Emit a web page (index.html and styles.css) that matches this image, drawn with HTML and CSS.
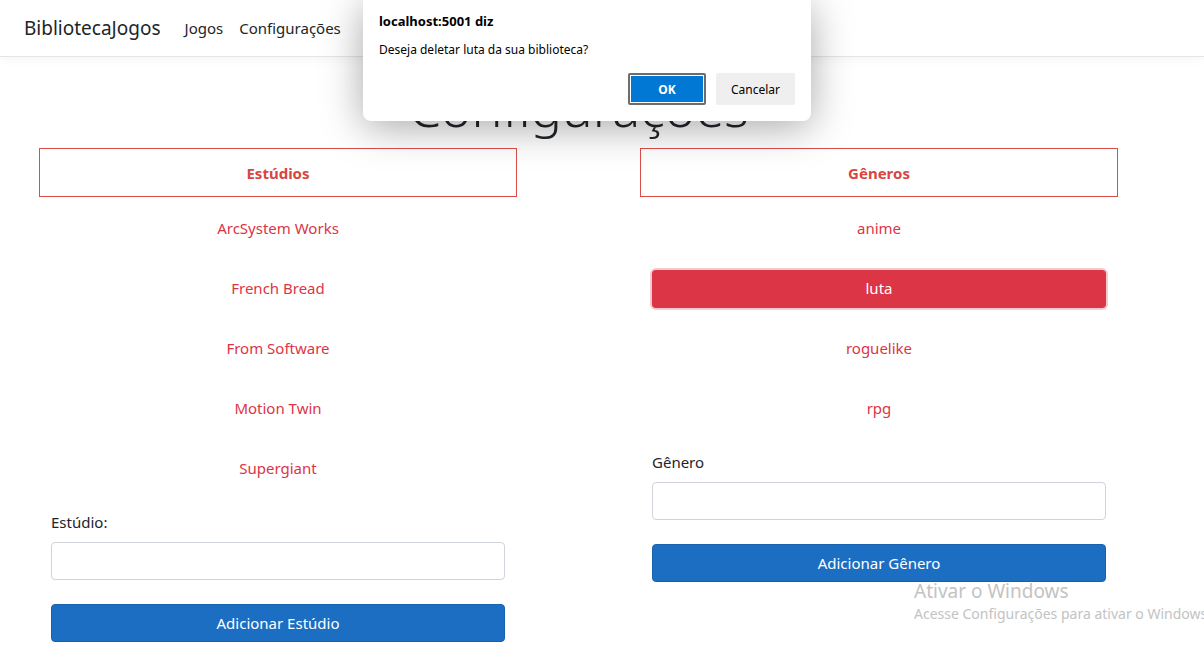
FILE: index.html
```html
<!DOCTYPE html>
<html lang="pt-BR">
<head>
<meta charset="utf-8">
<title>Configurações - BibliotecaJogos</title>
<link rel="stylesheet" href="styles.css">
</head>
<body>
<header class="navbar">
  <a class="brand" href="#">BibliotecaJogos</a>
  <nav class="nav">
    <a class="nav-link" href="#">Jogos</a>
    <a class="nav-link" href="#">Configurações</a>
  </nav>
</header>

<main class="page">
  <h1 class="title">Configurações</h1>
  <div class="columns">
    <section class="col">
      <div class="col-head">Estúdios</div>
      <ul class="items">
        <li><button class="item">ArcSystem Works</button></li>
        <li><button class="item">French Bread</button></li>
        <li><button class="item">From Software</button></li>
        <li><button class="item">Motion Twin</button></li>
        <li><button class="item">Supergiant</button></li>
      </ul>
      <form class="add-form">
        <label class="label">Estúdio:</label>
        <input class="input" type="text">
        <button class="btn-primary" type="button">Adicionar Estúdio</button>
      </form>
    </section>
    <section class="col">
      <div class="col-head">Gêneros</div>
      <ul class="items">
        <li><button class="item">anime</button></li>
        <li><button class="item active">luta</button></li>
        <li><button class="item">roguelike</button></li>
        <li><button class="item">rpg</button></li>
      </ul>
      <form class="add-form">
        <label class="label">Gênero</label>
        <input class="input" type="text">
        <button class="btn-primary" type="button">Adicionar Gênero</button>
      </form>
    </section>
  </div>
</main>

<div class="watermark">
  <div class="wm-title">Ativar o Windows</div>
  <div class="wm-sub">Acesse Configurações para ativar o Windows.</div>
</div>

<div class="dialog">
  <div class="dlg-title">localhost:5001 diz</div>
  <div class="dlg-msg">Deseja deletar luta da sua biblioteca?</div>
  <div class="dlg-actions">
    <button class="dlg-ok">OK</button>
    <button class="dlg-cancel">Cancelar</button>
  </div>
</div>
</body>
</html>
```

FILE: styles.css
```css
* { box-sizing: border-box; }
html, body { margin: 0; padding: 0; }
body {
  font-family: "Noto Sans", "Open Sans", sans-serif;
  font-size: 15px;
  color: #212529;
  background: #fff;
  width: 1204px;
  height: 646px;
  overflow: hidden;
  position: relative;
}
a { text-decoration: none; color: inherit; }

.navbar {
  height: 57px;
  display: flex;
  align-items: center;
  padding: 0 24px;
  border-bottom: 1px solid #e5e5e5;
  box-shadow: 0 3px 10px rgba(0,0,0,0.04);
}
.brand {
  font-size: 19px;
  color: #212529;
  margin-right: 16px;
}
.nav { display: flex; }
.nav-link {
  padding: 0 8px;
  font-size: 15px;
  color: #212529;
}

.page {
  width: 1079px;
  margin-left: 39px;
}
.title {
  margin: 16px 0 8px;
  height: 67px;
  font-size: 52px;
  line-height: 67px;
  font-weight: 300;
  text-align: center;
  color: #212529;
}
.columns {
  display: flex;
  gap: 123px;
}
.col {
  width: 478px;
}
.col-head {
  height: 49px;
  border: 1px solid #dc4d4a;
  color: #d9463f;
  font-weight: 700;
  display: flex;
  align-items: center;
  justify-content: center;
}
.items {
  list-style: none;
  margin: 13px 0 0;
  padding: 0 12px;
}
.items li { margin-bottom: 22px; }
.item {
  display: block;
  width: 100%;
  height: 38px;
  padding: 0 0 2px;
  border: 1px solid transparent;
  border-radius: 4px;
  background: transparent;
  color: #dc3545;
  font-family: inherit;
  font-size: 15px;
  cursor: pointer;
}
.item.active {
  background: #dc3545;
  color: #fff;
  box-shadow: 0 0 0 2px rgba(225,83,97,0.3);
}
.add-form {
  padding: 0 12px;
  display: flex;
  flex-direction: column;
}
.label {
  height: 24px;
  line-height: 24px;
  margin: 0 0 8px;
}
.input {
  height: 38px;
  border: 1px solid #ced4da;
  border-radius: 4px;
  margin-bottom: 24px;
  font-family: inherit;
}
.btn-primary {
  height: 38px;
  border: 1px solid #1861ac;
  border-radius: 4px;
  background: #1b6ec2;
  color: #fff;
  font-family: inherit;
  font-size: 15px;
}

.watermark {
  position: absolute;
  left: 914px;
  top: 578px;
  color: #c3c3c3;
  white-space: nowrap;
}
.wm-title { font-size: 19px; line-height: 26px; }
.wm-sub { font-size: 14px; line-height: 20px; }

.dialog {
  position: absolute;
  left: 363px;
  top: 0;
  width: 448px;
  height: 121px;
  background: #fff;
  border-radius: 0 0 8px 8px;
  box-shadow: 0 6px 40px rgba(0,0,0,0.35);
  padding: 12px 16px 0;
  font-family: "Noto Sans", sans-serif;
}
.dlg-title {
  font-size: 13px;
  font-weight: 700;
  color: #000;
  line-height: 18px;
}
.dlg-msg {
  margin-top: 11px;
  font-size: 12px;
  line-height: 18px;
  color: #000;
}
.dlg-actions {
  display: flex;
  justify-content: flex-end;
  gap: 10px;
  margin-top: 14px;
}
.dlg-ok {
  width: 78px;
  height: 32px;
  border: 2px solid #6d6d6d;
  outline: 1px solid #fff;
  outline-offset: -3px;
  background: #0078d4;
  color: #fff;
  font-weight: 700;
  font-family: inherit;
  font-size: 12px;
  border-radius: 2px;
}
.dlg-cancel {
  width: 79px;
  height: 32px;
  border: none;
  background: #efefef;
  color: #000;
  font-family: inherit;
  font-size: 12px;
  border-radius: 2px;
}
```
